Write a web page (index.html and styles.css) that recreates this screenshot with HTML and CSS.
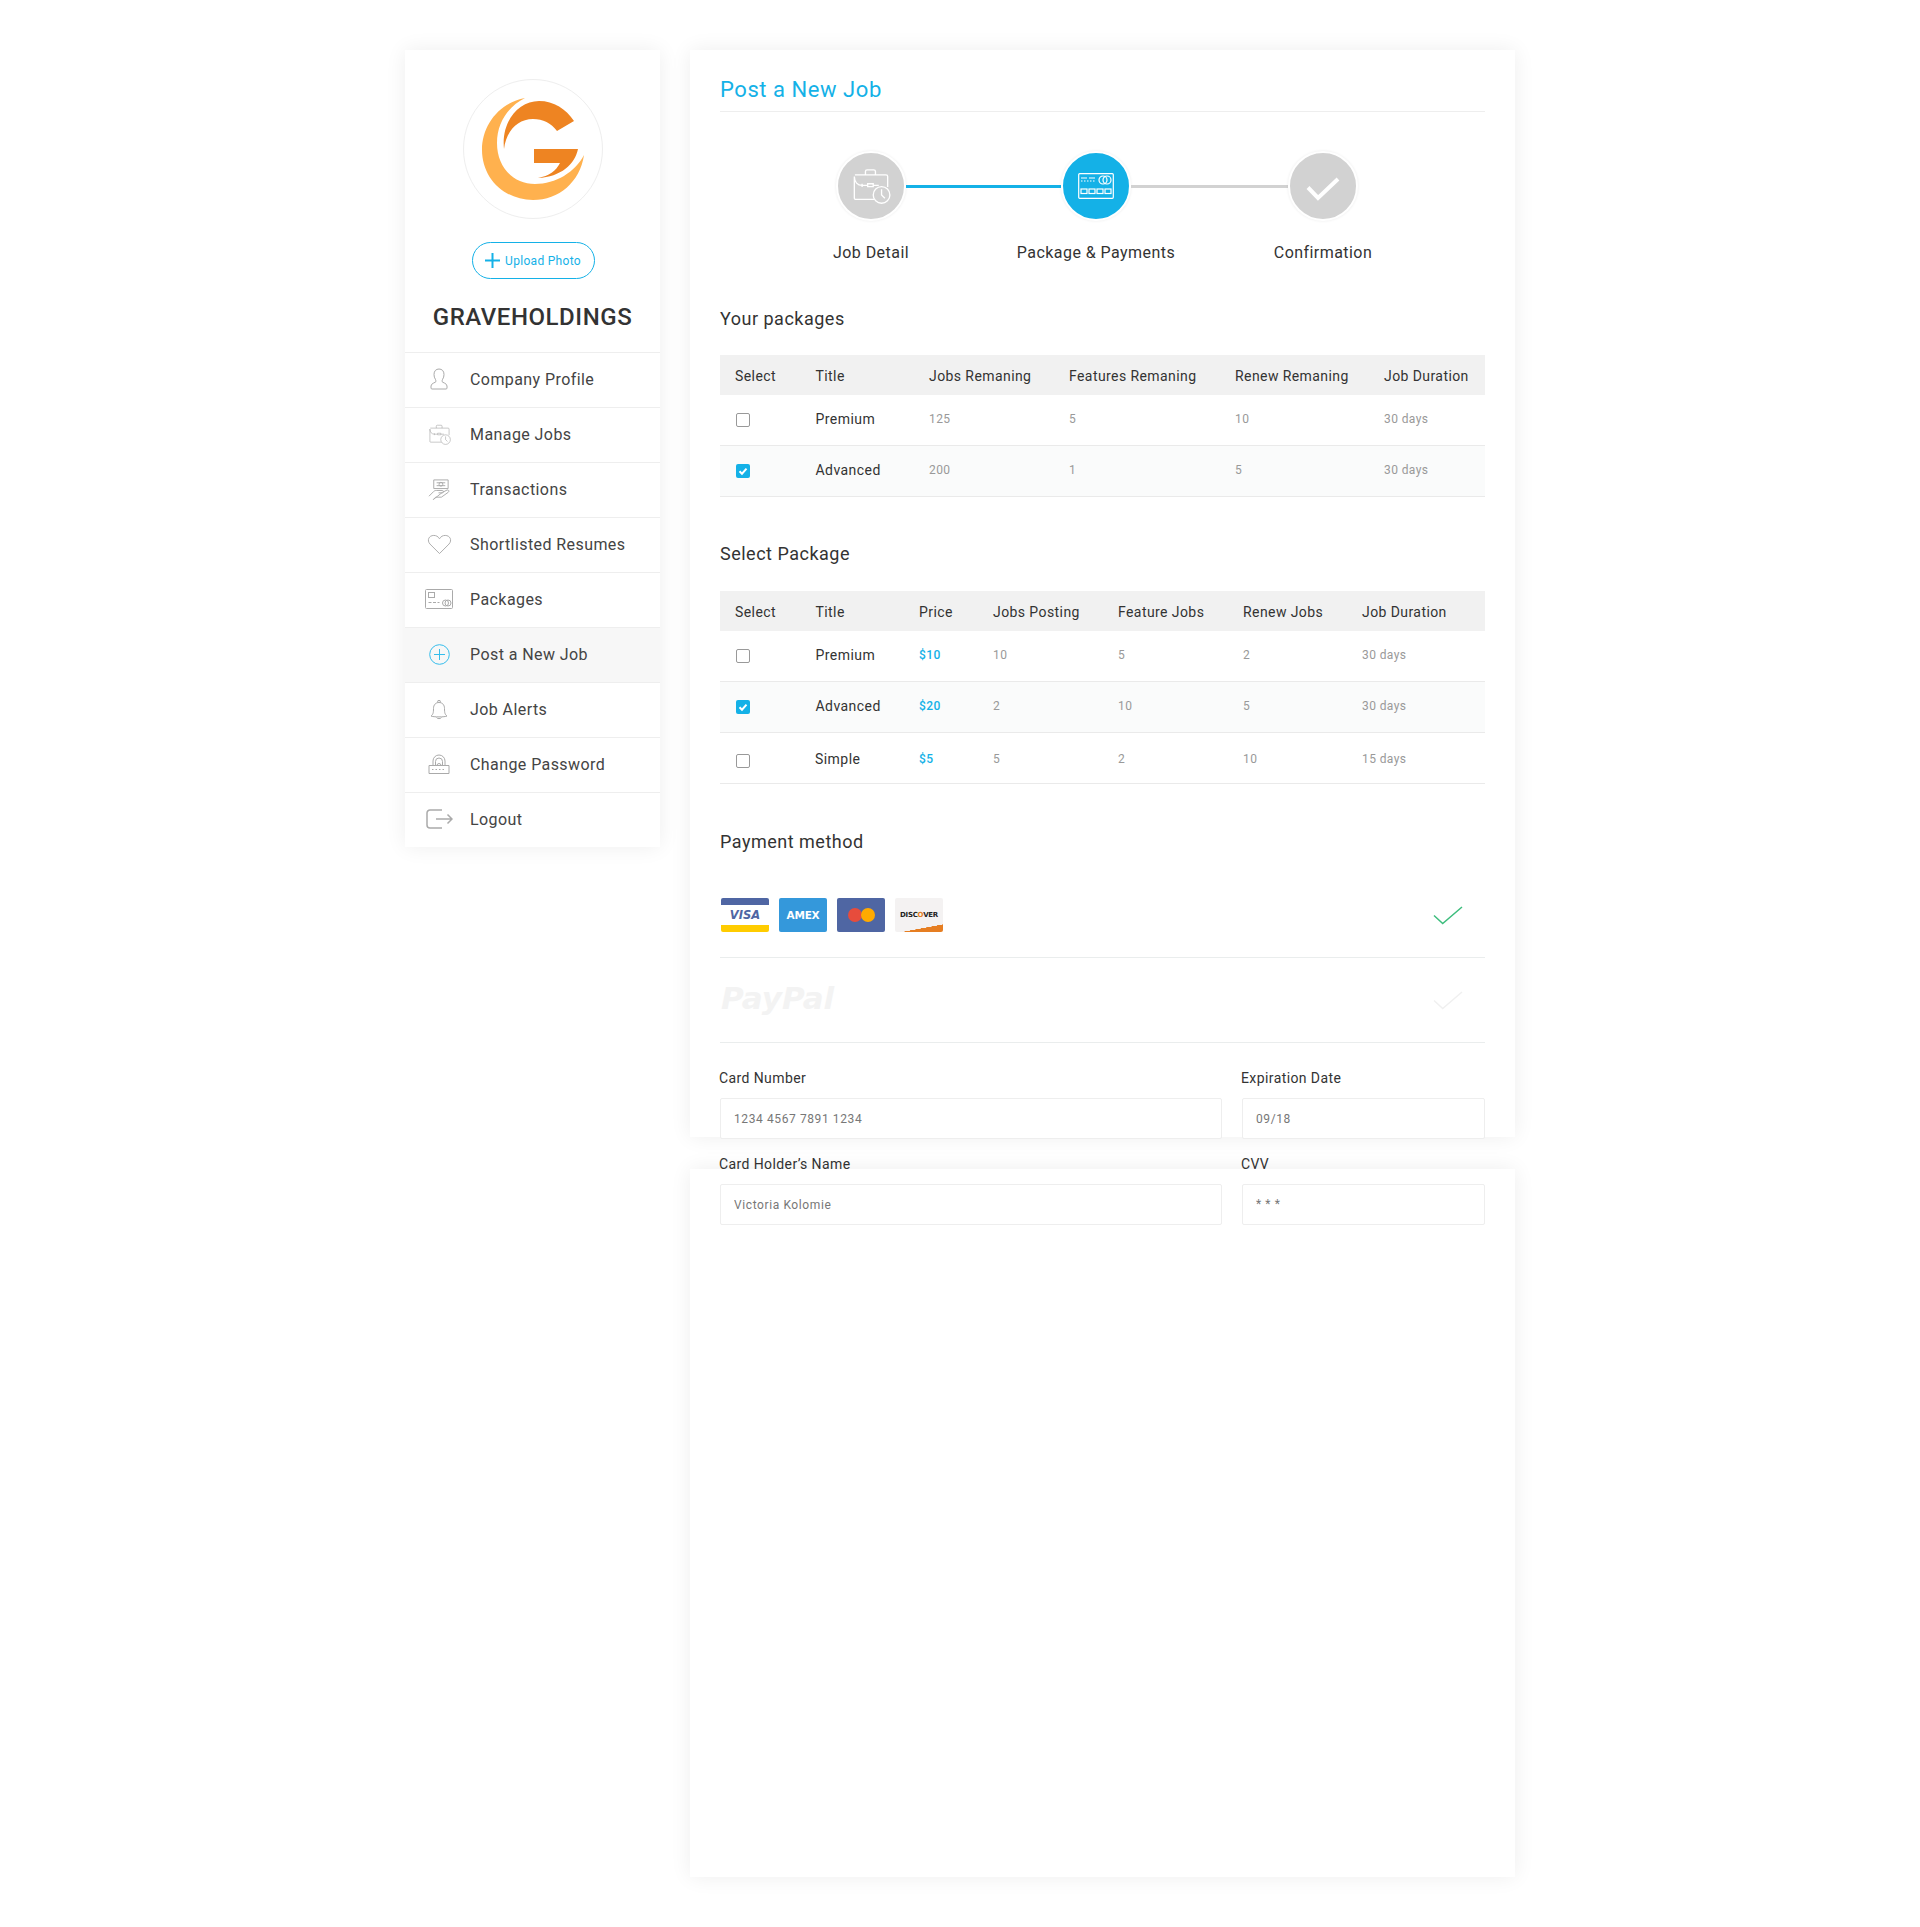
FILE: index.html
```html
<!DOCTYPE html>
<html lang="en">
<head>
<meta charset="utf-8">
<title>Post a New Job</title>
<link rel="stylesheet" href="styles.css">
</head>
<body>
<svg class="defs" width="0" height="0" aria-hidden="true">
  <symbol id="i-case" viewBox="0 0 36 36">
    <path d="M13 8V5a1.500 1.500 0 0 1 1.500-1.500h6A1.500 1.500 0 0 1 22 5v3M3.500 8h28a1.500 1.500 0 0 1 1.500 1.500V19M3 9.500V29a1 1 0 0 0 1 1h17M3 9.500c0 5 3 8 7 8h5M20 17.500h5M10 16v3M15 16h5v2.500h-5z"/>
    <circle cx="27.500" cy="26" r="7.500"/><path d="M27.500 21v5l3 3"/>
  </symbol>
  <symbol id="i-card" viewBox="0 0 36 26">
    <rect x=".7" y=".7" width="34.600" height="24.600" rx="1"/>
    <path d="M3 5h6M11 5h6M3 8h1.500M6 8h1.500M9 8h1.500M12 8h1.500M15 8h1.500"/>
    <circle cx="25" cy="7" r="4"/><circle cx="29" cy="7" r="4"/>
    <rect x="3" y="16" width="6" height="4.500"/><rect x="11" y="16" width="6" height="4.500"/><rect x="19" y="16" width="6" height="4.500"/><rect x="27" y="16" width="6" height="4.500"/>
  </symbol>
</svg>

<div class="page">
  <aside class="sidebar">
    <div class="profile">
      <div class="avatar">
        <svg class="logo" viewBox="0 0 138 138" width="138" height="138">
          <path class="logo-light" d="M61 18C35 23 18 45 18 70C18 98 40 120 69 120C95 120 116 102 120 75C111 92 92 104 71 104C49 104 33 87 33 63C33 42 45 26 61 18Z"/>
          <path class="logo-dark" d="M40 69C37 41 55 21 75 21C90 21 102 29 110 41L93 51C87 43 79 39 69 39C53 39 42 52 40 69Z"/>
          <path class="logo-dark" d="M70 69H114C111 84 97 97 74 98C85 96 92 91 96 83H70Z"/>
        </svg>
      </div>
      <button class="upload" type="button">
        <svg class="upload-plus" viewBox="0 0 15 15" width="15" height="15"><path d="M7.500 0v15M0 7.500h15"/></svg>
        <span>Upload Photo</span>
      </button>
      <h2 class="company">GRAVEHOLDINGS</h2>
    </div>
    <nav class="menu">
      <a class="menu-item">
        <span class="menu-icon"><svg viewBox="0 0 20 22" width="20" height="22"><path d="M7 13.500c-.2-1-.2-1.500-.6-2.200C5.500 10 5 8.500 5 6.500 5 3 7 1 10 1s5 2 5 5.500c0 2-.5 3.500-1.400 4.800-.4.700-.4 1.200-.6 2.200.5 1.200 5 1.800 5 4.500v2a1 1 0 0 1-1 1H3a1 1 0 0 1-1-1v-2c0-2.700 4.500-3.300 5-4.500z"/></svg></span>
        <span>Company Profile</span>
      </a>
      <a class="menu-item">
        <span class="menu-icon"><svg width="23" height="23"><use href="#i-case"/></svg></span>
        <span>Manage Jobs</span>
      </a>
      <a class="menu-item">
        <span class="menu-icon"><svg viewBox="0 0 24 24" width="23" height="23"><path d="M6 2h15v9H6zM9 5h9M9 8h9"/><circle cx="13.500" cy="6.500" r="2"/><path d="M1 19l5-5c1-1 2-1 3-1h6c1.500 0 1.500 2.500 0 2.500h-4M15 15l5-2.500c1.500-.5 2.500 1.500 1 2.500l-7 5H8l-2.500 2.500z"/></svg></span>
        <span>Transactions</span>
      </a>
      <a class="menu-item">
        <span class="menu-icon"><svg viewBox="0 0 26 22" width="25" height="21"><path d="M13 20.500 3 10.500C-.5 6.500 2 1.500 7 1.500c2.500 0 4.500 1 6 3.500 1.500-2.500 3.500-3.500 6-3.500 5 0 7.500 5 4 9z"/></svg></span>
        <span>Shortlisted Resumes</span>
      </a>
      <a class="menu-item">
        <span class="menu-icon"><svg viewBox="0 0 28 20" width="28" height="20"><rect x=".5" y=".5" width="27" height="19" rx="1"/><rect x="3.500" y="3.500" width="6" height="5"/><path d="M3.500 13.500h3M8 13.500h3M12.500 13.500h2"/><circle cx="20.500" cy="14" r="3"/><circle cx="23" cy="14" r="3"/></svg></span>
        <span>Packages</span>
      </a>
      <a class="menu-item is-active">
        <span class="menu-icon"><svg viewBox="0 0 21 21" width="21" height="21"><circle cx="10.500" cy="10.500" r="9.800"/><path d="M10.500 5v11M5 10.500h11"/></svg></span>
        <span>Post a New Job</span>
      </a>
      <a class="menu-item">
        <span class="menu-icon"><svg viewBox="0 0 18 21" width="18" height="21"><path d="M1 17c2-1.500 2.500-3 2.500-7.500C3.500 6 5.500 3.500 9 3.500s5.500 2.500 5.500 6c0 4.500.5 6 2.500 7.500-2 1.200-14 1.200-16 0zM7.500 3.500 8 1.500h2l.5 2M6.500 18.500c.5 1.500 4.500 1.500 5 0"/></svg></span>
        <span>Job Alerts</span>
      </a>
      <a class="menu-item">
        <span class="menu-icon"><svg viewBox="0 0 22 20" width="22" height="20"><path d="M1 11.500h20v8H1zM5 11.500V7a6 6 0 0 1 12 0v4.500M7.500 11.500V7.500a3.500 3.500 0 0 1 7 0v4M9 11.500a2 2 0 0 1 4 0M4 15.500h1.500M7.500 15.500H9M11 15.500h1.500M14.500 15.500H16"/></svg></span>
        <span>Change Password</span>
      </a>
      <a class="menu-item">
        <span class="menu-icon"><svg class="logout-icon" viewBox="0 0 27 20" width="27" height="20"><path d="M16 1H4a3 3 0 0 0-3 3v12a3 3 0 0 0 3 3h12M10 10h16M21.500 5.500 26 10l-4.500 4.500"/></svg></span>
        <span>Logout</span>
      </a>
    </nav>
  </aside>

  <main class="content">
    <section class="card card-main">
      <h1 class="page-title">Post a New Job</h1>

      <div class="stepper">
        <div class="step">
          <span class="step-dot"><svg width="40" height="40"><use href="#i-case"/></svg></span>
          <span class="step-label">Job Detail</span>
        </div>
        <span class="step-line is-done"></span>
        <div class="step">
          <span class="step-dot is-current"><svg width="36" height="26"><use href="#i-card"/></svg></span>
          <span class="step-label">Package &amp; Payments</span>
        </div>
        <span class="step-line"></span>
        <div class="step">
          <span class="step-dot"><svg class="step-check" viewBox="0 0 34 24" width="34" height="24"><path d="M2 10.500 12 21 32 2"/></svg></span>
          <span class="step-label">Confirmation</span>
        </div>
      </div>

      <h3 class="section-title">Your packages</h3>
      <table class="grid grid-a">
        <colgroup><col class="a1"><col class="a2"><col class="a3"><col class="a4"><col class="a5"><col></colgroup>
        <thead><tr><th>Select</th><th>Title</th><th>Jobs Remaning</th><th>Features Remaning</th><th>Renew Remaning</th><th>Job Duration</th></tr></thead>
        <tbody>
          <tr><td><span class="check"></span></td><td class="name">Premium</td><td>125</td><td>5</td><td>10</td><td>30 days</td></tr>
          <tr class="is-selected"><td><span class="check is-on"><svg viewBox="0 0 14 14" width="14" height="14"><path d="M3.500 7.200 6 9.700l4.500-5"/></svg></span></td><td class="name">Advanced</td><td>200</td><td>1</td><td>5</td><td>30 days</td></tr>
        </tbody>
      </table>

      <h3 class="section-title">Select Package</h3>
      <table class="grid grid-b">
        <colgroup><col class="b1"><col class="b2"><col class="b3"><col class="b4"><col class="b5"><col class="b6"><col></colgroup>
        <thead><tr><th>Select</th><th>Title</th><th>Price</th><th>Jobs Posting</th><th>Feature Jobs</th><th>Renew Jobs</th><th>Job Duration</th></tr></thead>
        <tbody>
          <tr><td><span class="check"></span></td><td class="name">Premium</td><td class="price">$10</td><td>10</td><td>5</td><td>2</td><td>30 days</td></tr>
          <tr class="is-selected"><td><span class="check is-on"><svg viewBox="0 0 14 14" width="14" height="14"><path d="M3.500 7.200 6 9.700l4.500-5"/></svg></span></td><td class="name">Advanced</td><td class="price">$20</td><td>2</td><td>10</td><td>5</td><td>30 days</td></tr>
          <tr><td><span class="check"></span></td><td class="name">Simple</td><td class="price">$5</td><td>5</td><td>2</td><td>10</td><td>15 days</td></tr>
        </tbody>
      </table>

      <h3 class="section-title">Payment method</h3>
      <div class="pay-row pay-cards">
        <div class="pay-logos">
          <span class="pay-logo visa">VISA</span>
          <span class="pay-logo amex">AMEX</span>
          <span class="pay-logo master"><i class="dot-red"></i><i class="dot-amber"></i></span>
          <span class="pay-logo discover">DISC<b class="disc-o">O</b>VER</span>
        </div>
        <svg class="pay-tick" viewBox="0 0 30 19" width="30" height="19"><path d="M1 9.500 9.700 17.500 29 1"/></svg>
      </div>
      <div class="pay-row pay-paypal">
        <span class="paypal">PayPal</span>
        <svg class="pay-tick is-off" viewBox="0 0 30 19" width="30" height="19"><path d="M1 9.500 9.700 17.500 29 1"/></svg>
      </div>

      <form class="form-grid">
        <label class="field"><span class="field-label">Card Number</span><input class="field-input" type="text" value="1234 4567 7891 1234"></label>
        <label class="field"><span class="field-label">Expiration Date</span><input class="field-input" type="text" value="09/18"></label>
        <label class="field"><span class="field-label">Card Holder’s Name</span><input class="field-input" type="text" value="Victoria Kolomie"></label>
        <label class="field"><span class="field-label">CVV</span><input class="field-input is-secret" type="text" value="* * *"></label>
      </form>
    </section>
    <section class="card card-rest"></section>
  </main>
</div>
</body>
</html>
```

FILE: styles.css
```css
* { box-sizing: border-box; }

html, body { margin: 0; background: #fff; }

body {
  font-family: Roboto, "Liberation Sans", sans-serif;
  color: #333;
  min-height: 1927px;
}

.defs { position: absolute; }

.page {
  width: 1110px;
  margin: 0 auto;
  padding-top: 50px;
  display: flex;
  align-items: flex-start;
  gap: 30px;
}

/* Sidebar */
.sidebar {
  width: 255px;
  flex: none;
  background: #fff;
  box-shadow: 0 0 20px rgba(0, 0, 0, .07);
}

.profile {
  display: flex;
  flex-direction: column;
  align-items: center;
  padding-top: 29px;
  padding-bottom: 20px;
}

.avatar {
  width: 140px;
  height: 140px;
  border: 1px solid #eee;
  border-radius: 50%;
}

.logo { display: block; }
.logo-light { fill: #ffb14e; }
.logo-dark { fill: #ee8422; }

.upload {
  margin: 23px 0 0 1px;
  width: 123px;
  height: 37px;
  border: 1px solid #14b1e7;
  border-radius: 19px;
  background: #fff;
  color: #14b1e7;
  font: 400 12px/1 Roboto, sans-serif;
  letter-spacing: .3px;
  display: flex;
  align-items: center;
  justify-content: center;
  gap: 5px;
  padding: 0;
}

.upload-plus { stroke: #14b1e7; stroke-width: 2; fill: none; }

.company {
  margin: 23px 0 0;
  font-size: 24px;
  line-height: 30px;
  font-weight: 500;
  letter-spacing: .55px;
  color: #333;
}

.menu-item {
  height: 55px;
  border-top: 1px solid #eee;
  display: flex;
  align-items: center;
  gap: 16px;
  padding-left: 19px;
  padding-bottom: 2px;
  font-size: 16px;
  letter-spacing: .42px;
  color: #444;
}

.menu-item.is-active {
  background: #f7f7f7;
}

.menu-icon {
  width: 30px;
  flex: none;
  display: flex;
  justify-content: center;
  align-items: center;
  color: #aaa;
}

.menu-icon svg {
  fill: none;
  stroke: currentColor;
  stroke-width: 1;
}

.is-active .menu-icon { color: #35bdec; }
.menu-icon .logout-icon { stroke-width: 1.500; }

/* Main */
.content {
  width: 825px;
  flex: none;
}

.card {
  background: #fff;
  box-shadow: 0 0 20px rgba(0, 0, 0, .07);
}

.card-main {
  height: 1087px;
  padding: 0 30px;
}

.card-rest {
  position: relative;
  z-index: 1;
  height: 708px;
  margin-top: 32px;
}

.page-title {
  margin: 0;
  height: 62px;
  padding-top: 25px;
  border-bottom: 1px solid #eee;
  font-size: 22px;
  line-height: 30px;
  font-weight: 400;
  letter-spacing: .55px;
  color: #14b1e7;
}

/* Stepper */
.stepper {
  display: flex;
  align-items: flex-start;
  margin: 39px 0 0 116px;
}

.step {
  width: 70px;
  flex: none;
  display: flex;
  flex-direction: column;
  align-items: center;
}

.step-dot {
  width: 70px;
  height: 70px;
  border-radius: 50%;
  border: 2px solid #fff;
  background: #d2d2d2;
  box-shadow: 0 0 3px rgba(0, 0, 0, .08);
  display: flex;
  align-items: center;
  justify-content: center;
  color: #fff;
}

.step-dot svg {
  fill: none;
  stroke: currentColor;
  stroke-width: 1.200;
}

.step-dot .step-check {
  stroke-width: 4;
  margin-top: 6px;
}

.step-dot.is-current { background: #14b1e7; }

.step-label {
  margin-top: 20px;
  font-size: 16px;
  line-height: 24px;
  font-weight: 400;
  letter-spacing: .45px;
  white-space: nowrap;
  color: #333;
}

.step-line {
  width: 157px;
  height: 3px;
  flex: none;
  margin-top: 34px;
  background: #d2d2d2;
}

.step-line.is-done {
  width: 155px;
  background: #14b1e7;
}

/* Sections */
.section-title {
  margin: 45px 0 24px;
  font-size: 18px;
  line-height: 26px;
  font-weight: 400;
  letter-spacing: .5px;
  color: #333;
}

.stepper + .section-title {
  margin-top: 41px;
  margin-bottom: 23px;
}

.grid-a + .section-title { margin-top: 44px; }

/* Tables */
.grid {
  width: 765px;
  table-layout: fixed;
  border-collapse: separate;
  border-spacing: 0;
}

.a1 { width: 80px; } .a2 { width: 114px; } .a3 { width: 140px; } .a4 { width: 166px; } .a5 { width: 149px; }
.b1 { width: 80px; } .b2 { width: 104px; } .b3 { width: 74px; } .b4 { width: 125px; } .b5 { width: 125px; } .b6 { width: 119px; }

.grid th {
  height: 40px;
  padding: 2px 0 0 15px;
  background: #f1f1f1;
  text-align: left;
  font-size: 14px;
  font-weight: 400;
  letter-spacing: .42px;
  color: #333;
  white-space: nowrap;
}

.grid th:nth-child(2) { padding-left: 15.500px; }

.grid td {
  height: 51px;
  padding: 0 0 3px 15px;
  border-bottom: 1px solid #eaeaea;
  font-size: 12px;
  letter-spacing: .4px;
  color: #999;
}

.grid-b tbody tr:last-child td { padding: 2px 0 0 15px; }

.grid tr.is-selected td { background: #fafbfb; }

.grid td.name {
  padding-left: 15.500px;
  font-size: 14px;
  font-weight: 400;
  letter-spacing: .45px;
  color: #333;
}

.grid td.price {
  color: #14b1e7;
  font-weight: 500;
}

.check {
  display: block;
  width: 14px;
  height: 14px;
  margin: 3px 0 0 1px;
  border: 1.500px solid #999;
  border-radius: 2px;
  background: #fff;
}

.check.is-on {
  border: 0;
  background: #14b1e7;
}

.check svg {
  display: block;
  fill: none;
  stroke: #fff;
  stroke-width: 2;
}

/* Payment */
.pay-row {
  display: flex;
  align-items: center;
  justify-content: space-between;
  border-bottom: 1px solid #eaeded;
  padding-right: 22px;
}

.section-title + .pay-row { margin-top: -24px; }

.pay-cards {
  height: 103px;
  padding-top: 43px;
  padding-bottom: 25px;
  padding-left: 1px;
}

.pay-paypal {
  height: 85px;
  padding-left: 1px;
}

.pay-logos {
  display: flex;
  gap: 10px;
}

.pay-logo {
  width: 48px;
  height: 34px;
  border-radius: 2px;
  display: flex;
  align-items: center;
  justify-content: center;
  gap: 0;
  overflow: hidden;
  font-family: "DejaVu Sans", sans-serif;
  font-weight: 700;
}

.visa {
  background: linear-gradient(#4f66a3 0 7px, #fff 7px 27px, #fc0 27px);
  color: #4f66a3;
  font-size: 11.500px;
  font-style: italic;
}

.amex {
  background: #3498db;
  color: #fff;
  font-size: 10.500px;
  letter-spacing: -.2px;
}

.master { background: #4f66a3; }

.dot-red, .dot-amber {
  width: 14px;
  height: 14px;
  border-radius: 50%;
}

.dot-red { background: #e74c3c; }
.dot-amber { background: #fa0; margin-left: -1px; }

.discover {
  background: linear-gradient(169.500deg, #f4f2f2 0 82%, #e67e22 82.500%);
  color: #222;
  font-size: 7px;
  letter-spacing: -.3px;
  padding-bottom: 1px;
}

.disc-o { color: #e67e22; }

.paypal {
  font-family: "DejaVu Sans", sans-serif;
  font-size: 31px;
  font-weight: 700;
  font-style: italic;
  letter-spacing: 0;
  color: #f3f3f3;
  margin-bottom: 4px;
}

.pay-tick {
  fill: none;
  stroke: #3dbd7d;
  stroke-width: 1.500;
}

.pay-tick.is-off { stroke: #f0f0f0; }

/* Form */
.form-grid {
  display: grid;
  grid-template-columns: 502px 243px;
  column-gap: 20px;
  row-gap: 15px;
  margin-top: 25px;
}

.field { display: block; }

.field-label {
  display: block;
  height: 20px;
  margin: 0 0 10px -1px;
  font-size: 14px;
  line-height: 20px;
  font-weight: 400;
  letter-spacing: .4px;
  color: #333;
}

.field-input {
  position: relative;
  z-index: 2;
  display: block;
  width: 100%;
  height: 41px;
  padding: 0 13px;
  border: 1px solid #eee;
  border-radius: 2px;
  background: #fff;
  font: 400 12px Roboto, sans-serif;
  letter-spacing: .6px;
  color: #777;
  outline: 0;
}

.field-input.is-secret { padding-bottom: 2px; }
```
